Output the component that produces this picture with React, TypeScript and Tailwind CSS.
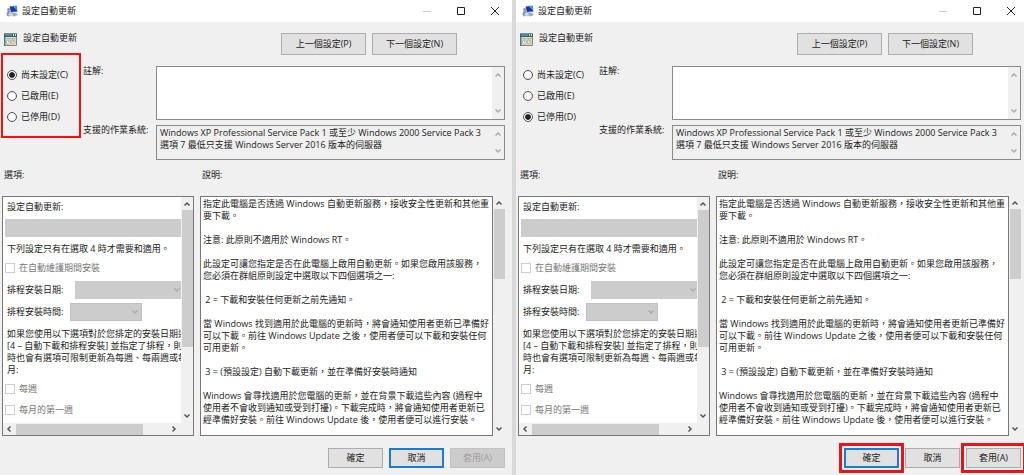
import { useId } from "react";
import type { ReactNode } from "react";

type WindowProps = {
  selected: string;
  primary: "ok" | "cancel";
  applyEnabled: boolean;
  edge: string;
  markRadios?: boolean;
  markButtons?: boolean;
};

const states = ["尚未設定(C)", "已啟用(E)", "已停用(D)"];

const help = `指定此電腦是否透過 Windows 自動更新服務，接收安全性更新和其他重
要下載。

注意: 此原則不適用於 Windows RT。

此設定可讓您指定是否在此電腦上啟用自動更新。如果您啟用該服務，
您必須在群組原則設定中選取以下四個選項之一:

 2 = 下載和安裝任何更新之前先通知。

當 Windows 找到適用於此電腦的更新時，將會通知使用者更新已準備好
可以下載。前往 Windows Update 之後，使用者便可以下載和安裝任何
可用更新。

 3 = (預設設定) 自動下載更新，並在準備好安裝時通知

Windows 會尋找適用於您電腦的更新，並在背景下載這些內容 (過程中
使用者不會收到通知或受到打擾)。下載完成時，將會通知使用者更新已
經準備好安裝。前往 Windows Update 後，使用者便可以進行安裝。`;

function Chevron({ dir, className = "" }: { dir: "up" | "down" | "left" | "right"; className?: string }) {
  const d = {
    up: "M1.5 5.5 4 3l2.5 2.5",
    down: "M1.5 2.5 4 5l2.5-2.5",
    left: "M5.5 1.5 3 4l2.5 2.5",
    right: "M2.5 1.5 5 4 2.5 6.5",
  }[dir];
  return (
    <svg viewBox="0 0 8 8" className={`size-2 shrink-0 ${className}`} fill="none" stroke="currentColor" strokeWidth="1.5" aria-hidden="true">
      <path d={d} />
    </svg>
  );
}

function PolicyIcon() {
  return (
    <svg viewBox="0 0 12 12" className="size-3 shrink-0" aria-hidden="true">
      <path d="M3 1 11 .3l.7 7L5 8z" fill="#b4c3d8" />
      <path d="M3.800 1.700 10.600 1l.5 5.300L5 6.900z" fill="#1238a8" />
      <path d="M7 1.400 10.600 1l.4 4.500z" fill="#5c9cec" />
      <path d="M6 8h4l2 2-4 1.500L5 10z" fill="#a3abb6" />
      <circle cx="2.600" cy="4.500" r="1.500" fill="#a58c78" />
      <path d="M.5 10c0-3 1-4.300 2.400-4.300S5.600 7.500 6 10.500L2 11.500z" fill="#7d96bf" />
      <path d="m4 7 3 2.500-1 2L2 10z" fill="#c7d6e8" />
    </svg>
  );
}

function SettingIcon() {
  return (
    <svg viewBox="0 0 13 13" className="size-[13px] shrink-0" aria-hidden="true">
      <path d="M.5 1h12v11.500H.5z" fill="#dcdccb" stroke="#7f8a86" />
      <path d="M0 .5h13V4H0z" fill="#2f6572" />
      <path d="M1 1.500h7v1H1z" fill="#7fb2b8" />
      <path d="M9 1h1v2H9zm2 0h1v2h-1z" fill="#e9dfa8" />
      <path d="M2 5h10v1H2z" fill="#a9bfc4" />
      <circle cx="4.500" cy="9" r="2.200" fill="#fbfbf6" stroke="#9aa9a8" strokeWidth=".8" />
      <circle cx="9" cy="8.500" r="2" fill="#f8f3e0" stroke="#b9a573" strokeWidth=".8" />
      <path d="M4.500 7.500V9h1M9 7v1.500l1-.5" fill="none" stroke="#8c8a6a" strokeWidth=".7" />
      <path d="M0 4h1.500v9H0z" fill="#4f7883" />
    </svg>
  );
}

function PushButton({
  children,
  className = "",
  look = "normal",
}: {
  children: ReactNode;
  className?: string;
  look?: "normal" | "default" | "disabled";
}) {
  const looks = {
    normal: "border border-[#adadad] bg-[#e1e1e1]",
    default: "border-2 border-[#1a7cd0] bg-[#e1e1e1]",
    disabled: "border border-[#c2c2c2] bg-[#cccccc] text-[#a0a0a0]",
  };
  return (
    <button type="button" disabled={look === "disabled"} className={`flex items-center justify-center ${looks[look]} ${className}`}>
      {children}
    </button>
  );
}

function PolicyWindow({ selected, primary, applyEnabled, edge, markRadios, markButtons }: WindowProps) {
  const id = useId();
  const mark = markButtons ? "outline-3 outline-offset-2 outline-[#e8141c]" : "";
  return (
    <section className="flex min-w-0 flex-col bg-[#f0f0f0]">
      <header className={`flex h-[22px] items-center bg-white pl-[6px] ${edge}`}>
        <PolicyIcon />
        <h1 className="ml-1 flex-1">設定自動更新</h1>
        <div className="flex items-center gap-[26px] pr-[6px]">
          <button type="button" aria-label="最小化" disabled className="text-[#cccccc]">
            <svg viewBox="0 0 8 8" className="size-2" stroke="currentColor" aria-hidden="true"><path d="M0 4.500h8" /></svg>
          </button>
          <button type="button" aria-label="最大化">
            <svg viewBox="0 0 8 8" className="size-2" fill="none" stroke="#222" aria-hidden="true"><path d="M.5.5h7v7h-7z" /></svg>
          </button>
          <button type="button" aria-label="關閉">
            <svg viewBox="0 0 8 8" className="size-2" fill="none" stroke="#222" aria-hidden="true"><path d="m0 0 8 8M8 0 0 8" /></svg>
          </button>
        </div>
      </header>

      <div className={`flex items-start pt-[11px] pl-1 ${edge}`}>
        <div className="flex flex-1 items-start gap-[6px]">
          <SettingIcon />
          <h2 className="-mt-px">設定自動更新</h2>
        </div>
        <div className="flex gap-[6px] pr-12">
          <PushButton className="h-[22px] w-[85px]">上一個設定(P)</PushButton>
          <PushButton className="h-[22px] w-[85px]">下一個設定(N)</PushButton>
        </div>
      </div>

      <div className={`flex pt-[11px] ${edge}`}>
        <fieldset
          aria-label="設定狀態"
          className={`-mt-[13px] ml-px flex h-[85px] w-[80px] shrink-0 flex-col gap-[9px] border-2 pt-[14px] pl-1 ${markRadios ? "border-[#f80c0c]" : "border-transparent"}`}
        >
          {states.map((s) => (
            <label key={s} className="flex items-center gap-1 whitespace-nowrap">
              <input
                type="radio"
                name={id}
                defaultChecked={s === selected}
                className="size-[10px] shrink-0 appearance-none rounded-full border border-[#555] bg-white bg-clip-content p-px checked:bg-[#222] checked:shadow-[inset_0_0_0_1px_#fff]"
              />
              {s}
            </label>
          ))}
        </fieldset>
        <div className="ml-[2px] grid min-w-0 flex-1 grid-cols-[73px_1fr] gap-y-[5px]">
          <label htmlFor={`${id}-note`} className="-mt-px">註解:</label>
          <div className="flex h-[54px] border border-[#8a8a8a] bg-white">
            <textarea id={`${id}-note`} className="min-w-0 flex-1 resize-none outline-none" />
            <div className="flex w-3 flex-col items-center justify-between bg-[#f0f0f0] py-1 text-[#aaa]">
              <Chevron dir="up" />
              <Chevron dir="down" />
            </div>
          </div>
          <span className="-mt-px whitespace-nowrap">支援的作業系統:</span>
          <div className="flex h-[35px] border border-[#8a8a8a]">
            <p className="min-w-0 flex-1 overflow-hidden pt-px pl-[3px] whitespace-pre">
              {"Windows XP Professional Service Pack 1 或至少 Windows 2000 Service Pack 3\n選項 7 最低只支援 Windows Server 2016 版本的伺服器"}
            </p>
            <div className="flex w-3 flex-col items-center justify-between py-1 text-[#aaa]">
              <Chevron dir="up" />
              <Chevron dir="down" />
            </div>
          </div>
        </div>
      </div>

      <div className={`mt-[9px] grid grid-cols-[192px_1fr] gap-x-[6px] gap-y-[15px] pl-[2px] ${edge}`}>
        <h3 className="pl-[2px]">選項:</h3>
        <h3 className="pl-[2px]">說明:</h3>

        <div className="flex h-[240px] flex-col border border-[#777] bg-white">
          <div className="flex min-h-0 flex-1">
            <div className="flex min-w-0 flex-1 flex-col overflow-hidden pl-[2px] whitespace-nowrap">
              <label htmlFor={`${id}-mode`} className="pt-1 pl-[2px]">設定自動更新:</label>
              <select id={`${id}-mode`} disabled className="mt-[6px] h-[18px] shrink-0 appearance-none bg-[#cccccc]" />
              <p className="mt-[6px] pl-[2px]">下列設定只有在選取 4 時才需要和適用。</p>
              <label className="mt-[7px] flex items-center gap-1 text-[#777]">
                <input type="checkbox" disabled className="size-[10px] appearance-none border border-[#ccc] bg-white" />
                在自動維護期間安裝
              </label>
              <div className="mt-[7px] flex h-[18px] shrink-0 items-center pl-[2px]">
                <label htmlFor={`${id}-day`} className="w-[68px]">排程安裝日期:</label>
                <span className="grid flex-1 items-center">
                  <select id={`${id}-day`} disabled className="col-start-1 row-start-1 h-[18px] w-full appearance-none bg-[#cccccc]" />
                  <Chevron dir="down" className="col-start-1 row-start-1 justify-self-end text-[#aaa]" />
                </span>
              </div>
              <div className="mt-[4px] flex h-[18px] shrink-0 items-center pl-[2px]">
                <label htmlFor={`${id}-time`} className="w-[63px]">排程安裝時間:</label>
                <span className="grid w-[72px] items-center">
                  <select id={`${id}-time`} disabled className="col-start-1 row-start-1 h-[18px] w-full appearance-none border border-[#bfbfbf] bg-[#cccccc]" />
                  <Chevron dir="down" className="col-start-1 row-start-1 mr-[3px] justify-self-end text-[#aaa]" />
                </span>
              </div>
              <p className="mt-[7px] pl-[2px] whitespace-pre">
                {"如果您使用以下選項對於您排定的安裝日期選取\n[4 – 自動下載和排程安裝] 並指定了排程，則同\n時也會有選項可限制更新為每週、每兩週或每\n月:"}
              </p>
              <label className="mt-[7px] flex items-center gap-1 text-[#777]">
                <input type="checkbox" disabled className="size-[10px] appearance-none border border-[#ccc] bg-white" />
                每週
              </label>
              <label className="mt-[9px] flex items-center gap-1 text-[#777]">
                <input type="checkbox" disabled className="size-[10px] appearance-none border border-[#ccc] bg-white" />
                每月的第一週
              </label>
            </div>
            <div className="flex w-3 shrink-0 flex-col items-center bg-[#f0f0f0] py-[3px] text-[#555]">
              <Chevron dir="up" />
              <div className="mt-[2px] h-[137px] w-[11px] bg-[#cdcdcd]" />
              <Chevron dir="down" className="mt-auto" />
            </div>
          </div>
          <div className="flex h-3 shrink-0 items-center bg-[#f0f0f0] pr-[15px] pl-[2px] text-[#555]">
            <Chevron dir="left" />
            <div className="ml-[3px] h-[11px] w-[127px] bg-[#cdcdcd]" />
            <Chevron dir="right" className="ml-auto" />
          </div>
        </div>

        <div className="flex h-[240px] min-w-0">
          <p className="min-w-0 flex-1 overflow-hidden border border-[#777] bg-white pt-px pl-[2px] whitespace-pre">{help}</p>
          <div className="flex w-3 shrink-0 flex-col items-center py-[3px] text-[#555]">
            <Chevron dir="up" />
            <div className="mt-[2px] h-[70px] w-[11px] bg-[#cdcdcd]" />
            <Chevron dir="down" className="mt-auto" />
          </div>
        </div>
      </div>

      <footer className={`mt-3 flex justify-end gap-[6px] ${edge}`}>
        <PushButton look={primary === "ok" ? "default" : "normal"} className={`h-5 w-[55px] ${mark}`}>確定</PushButton>
        <PushButton look={primary === "cancel" ? "default" : "normal"} className="h-5 w-[55px]">取消</PushButton>
        <PushButton look={applyEnabled ? "normal" : "disabled"} className={`h-5 w-[55px] ${mark}`}>套用(A)</PushButton>
      </footer>
    </section>
  );
}

export default function App() {
  return (
    <main className="grid min-h-screen grid-cols-[512fr_4px_508fr] overflow-hidden bg-[#f0f0f0] font-['Open_Sans','Noto_Sans_CJK_TC',sans-serif] text-[9px] leading-[12px] text-[#222]">
      <PolicyWindow selected={states[0]} primary="cancel" applyEnabled={false} edge="pr-[7px]" markRadios />
      <div className="bg-[#d9d9d9]" />
      <PolicyWindow selected={states[2]} primary="ok" applyEnabled edge="pr-[3px]" markButtons />
    </main>
  );
}
